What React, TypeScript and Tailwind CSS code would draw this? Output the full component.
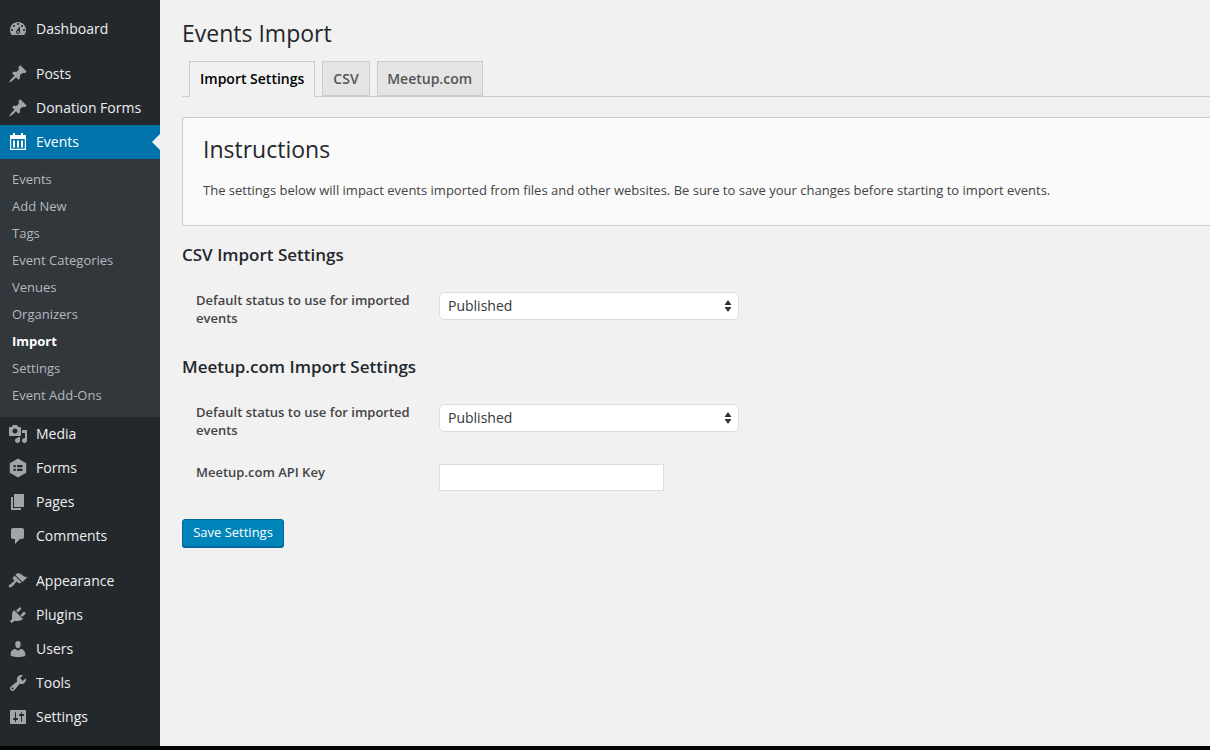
const icons: Record<string, string> = {
  dashboard:
    'M3.76 16h12.48c1.1-1.37 1.76-3.11 1.76-5 0-4.42-3.58-8-8-8s-8 3.58-8 8c0 1.89.66 3.63 1.76 5zM10 4c.55 0 1 .45 1 1s-.45 1-1 1-1-.45-1-1 .45-1 1-1zM6 6c.55 0 1 .45 1 1s-.45 1-1 1-1-.45-1-1 .45-1 1-1zm8 0c.55 0 1 .45 1 1s-.45 1-1 1-1-.45-1-1 .45-1 1-1zm-5.37 5.55L12 7v6c0 1.1-.9 2-2 2s-2-.9-2-2c0-.57.24-1.08.63-1.45zM4 10c.55 0 1 .45 1 1s-.45 1-1 1-1-.45-1-1 .45-1 1-1zm12 0c.55 0 1 .45 1 1s-.45 1-1 1-1-.45-1-1 .45-1 1-1zm-5 3c0-.55-.45-1-1-1s-1 .45-1 1 .45 1 1 1 1-.45 1-1z',
  pin: 'M10.44 3.02l1.82-1.82 6.36 6.35-1.83 1.82c-1.05-.68-2.48-.57-3.41.36l-.75.75c-.92.93-1.04 2.35-.35 3.41l-1.83 1.82-2.41-2.41-2.8 2.79c-.42.42-3.38 2.71-3.8 2.29s1.86-3.39 2.28-3.81l2.79-2.79L4.1 9.36l1.83-1.82c1.05.69 2.48.57 3.4-.36l.75-.75c.93-.92 1.05-2.35.36-3.41z',
  media:
    'M13 11V4c0-.55-.45-1-1-1h-1.67L9 1H5L3.67 3H2c-.55 0-1 .45-1 1v7c0 .55.45 1 1 1h10c.55 0 1-.45 1-1zM7 4.5c1.38 0 2.5 1.12 2.5 2.5S8.38 9.5 7 9.5 4.5 8.38 4.5 7 5.62 4.5 7 4.5zM14 6h5v10.5c0 1.38-1.12 2.5-2.5 2.5S14 17.88 14 16.5s1.12-2.5 2.5-2.5c.17 0 .34.02.5.05V9h-3V6zm-4 8.05V13h2v3.5c0 1.38-1.12 2.5-2.5 2.5S7 17.88 7 16.5 8.12 14 9.5 14c.17 0 .34.02.5.05z',
  forms:
    'M10 .5l8.2 4.7v9.6L10 19.5l-8.2-4.7V5.2L10 .5zM5.5 7v2.2h2.2V7H5.5zm3.6 0v2.2h5.4V7H9.1zm-3.6 3.8V13h2.2v-2.2H5.5zm3.6 0V13h5.4v-2.2H9.1z',
  pages: 'M6 15V2h10v13H6zm-1 1h8v2H3V5h2v11z',
  comments: 'M5 2h9c1.1 0 2 .9 2 2v7c0 1.1-.9 2-2 2h-2l-5 5v-5H5c-1.1 0-2-.9-2-2V4c0-1.1.9-2 2-2z',
  appearance:
    'M14.48 11.06L7.41 3.99l1.5-1.5c.5-.56 2.3-.47 3.51.32 1.21.8 1.43 1.28 2.91 2.1 1.18.64 2.45 1.26 4.45.85zm-.71.71L6.7 4.7 4.93 6.47c-.39.39-.39 1.02 0 1.41l1.06 1.06c.39.39.39 1.03 0 1.42-.6.6-1.43 1.11-2.21 1.69-.35.26-.7.53-1.01.84C1.43 13.23 0 15 1.04 16.04c1.04 1.04 3.14-.4 4.5-1.76.3-.31.57-.66.84-1.01.58-.78 1.08-1.61 1.68-2.21.39-.39 1.03-.39 1.42 0l1.06 1.06c.39.39 1.02.39 1.41 0z',
  plugins:
    'M13.11 4.36L9.87 7.6 8 5.73l3.24-3.24c.35-.34 1.05-.2 1.56.32.52.51.66 1.21.31 1.55zm-8 1.77l.91-1.12 9.01 9.01-1.19.84c-.71.71-2.63 1.16-3.82 1.16H6.14L4.9 17.26c-.59.59-1.54.59-2.12 0-.59-.58-.59-1.53 0-2.12l1.24-1.24v-3.88c0-1.13.4-3.19 1.09-3.89zm7.26 3.97l3.24-3.24c.34-.35 1.04-.21 1.55.31.52.51.66 1.21.31 1.55l-3.24 3.25z',
  users:
    'M10 9.25c-2.27 0-2.73-3.44-2.73-3.44C7 4.02 7.82 2 9.97 2c2.16 0 2.98 2.02 2.71 3.81 0 0-.41 3.44-2.68 3.44zm0 2.57L12.72 10c2.39 0 4.52 2.33 4.52 4.53v2.49s-3.65 1.13-7.24 1.13c-3.65 0-7.24-1.13-7.24-1.13v-2.49c0-2.25 1.94-4.48 4.47-4.48z',
  tools:
    'M16.68 9.77c-1.34 1.34-3.3 1.67-4.95.99l-5.41 6.52c-.99.99-2.59.99-3.58 0s-.99-2.59 0-3.57l6.52-5.42c-.68-1.65-.35-3.61.99-4.95 1.28-1.28 3.12-1.62 4.72-1.06l-2.89 2.89 2.82 2.82 2.86-2.87c.53 1.58.18 3.39-1.08 4.67zM3.81 16.21c.4.39 1.04.39 1.43 0 .4-.4.4-1.04 0-1.43-.39-.4-1.03-.4-1.43 0-.39.39-.39 1.03 0 1.43z',
  settings:
    'M18 16V4c0-.55-.45-1-1-1H3c-.55 0-1 .45-1 1v12c0 .55.45 1 1 1h14c.55 0 1-.45 1-1zM8 11h1c.55 0 1 .45 1 1s-.45 1-1 1H8v1.5c0 .28-.22.5-.5.5s-.5-.22-.5-.5V13H6c-.55 0-1-.45-1-1s.45-1 1-1h1V5.5c0-.28.22-.5.5-.5s.5.22.5.5V11zm5-2h-1c-.55 0-1-.45-1-1s.45-1 1-1h1V5.5c0-.28.22-.5.5-.5s.5.22.5.5V7h1c.55 0 1 .45 1 1s-.45 1-1 1h-1v5.5c0 .28-.22.5-.5.5s-.5-.22-.5-.5V9z',
  calendar:
    'M5 1h2v2h6V1h2v2h3v15H2V3h3V1zM3.2 7v9.8h13.6V7H3.2zM5 8.5h2v7H5v-7zm4 0h2v7H9v-7zm4 0h2v7h-2v-7z',
};

function MenuIcon({ name, white }: { name: string; white?: boolean }) {
  return (
    <svg
      viewBox="0 0 20 20"
      className={`w-5 h-5 shrink-0 ${white ? 'fill-white' : 'fill-[#a0a5aa]'}`}
    >
      <path fillRule="evenodd" d={icons[name]} />
    </svg>
  );
}

function MenuItem({ icon, label }: { icon: string; label: string }) {
  return (
    <div className="flex items-center h-[34px] pl-[8px] gap-[8px] text-[14px] text-[#eee]">
      <MenuIcon name={icon} />
      <span className="mb-[2px]">{label}</span>
    </div>
  );
}

const subItems = ['Events', 'Add New', 'Tags', 'Event Categories', 'Venues', 'Organizers', 'Import', 'Settings', 'Event Add-Ons'];

function Sidebar() {
  return (
    <div className="w-[160px] shrink-0 bg-[#23282d] pt-[12px]">
      <MenuItem icon="dashboard" label="Dashboard" />
      <div className="h-[11px]" />
      <MenuItem icon="pin" label="Posts" />
      <MenuItem icon="pin" label="Donation Forms" />
      <div className="relative flex items-center h-[34px] pl-[8px] gap-[8px] text-[14px] text-white bg-[#0073aa]">
        <MenuIcon name="calendar" white />
        <span className="mb-[2px]">Events</span>
        <div className="absolute right-0 top-[9px] border-y-[8px] border-r-[8px] border-y-transparent border-r-[#f1f1f1]" />
      </div>
      <div className="bg-[#32373c] pt-[7px] pb-[8px]">
        {subItems.map((item) => (
          <div
            key={item}
            className={`h-[27px] pl-[12px] flex items-center text-[13px] ${
              item === 'Import' ? 'font-bold text-white' : 'text-[#b4b9be]'
            }`}
          >
            {item}
          </div>
        ))}
      </div>
      <MenuItem icon="media" label="Media" />
      <MenuItem icon="forms" label="Forms" />
      <MenuItem icon="pages" label="Pages" />
      <MenuItem icon="comments" label="Comments" />
      <div className="h-[11px]" />
      <MenuItem icon="appearance" label="Appearance" />
      <MenuItem icon="plugins" label="Plugins" />
      <MenuItem icon="users" label="Users" />
      <MenuItem icon="tools" label="Tools" />
      <MenuItem icon="settings" label="Settings" />
    </div>
  );
}

function StatusSelect() {
  return (
    <div className="relative w-[300px] h-[28px]">
      <select className="w-full h-full appearance-none bg-white border border-[#ddd] rounded-[5px] pl-[8px] pb-[2px] text-[14px] text-[#32373c]">
        <option>Published</option>
      </select>
      <svg viewBox="0 0 8 14" className="absolute right-[7px] top-[7px] w-[8px] h-[14px] fill-[#333]">
        <path d="M4 1l3.5 5h-7zM4 13L.5 8h7z" />
      </svg>
    </div>
  );
}

function FormRow({ label, children }: { label: string; children: React.ReactNode }) {
  return (
    <div className="flex">
      <div className="w-[257px] pl-[14px] pr-[20px] -mt-[1px] text-[13px] leading-[18px] font-semibold text-[#444] shrink-0">
        {label}
      </div>
      {children}
    </div>
  );
}

export default function App() {
  return (
    <div className="w-[1210px] h-[750px] overflow-hidden flex flex-col font-['Open_Sans',sans-serif]">
      <div className="flex h-[746px]">
        <Sidebar />
        <div className="flex-1 bg-[#f1f1f1] pl-[22px] overflow-hidden">
          <h1 className="text-[23px] leading-[29px] text-[#23282d] pt-[19px] h-[61px] box-border">Events Import</h1>
          <div className="flex h-[36px] pl-[7px] gap-[7px] border-b border-[#ccc]">
            <div className="h-[36px] px-[10px] pb-[2px] flex items-center border border-b-0 border-[#ccc] bg-[#f1f1f1] text-[14px] font-semibold text-black">
              Import Settings
            </div>
            <div className="h-[35px] px-[10px] pb-[1px] flex items-center border border-[#ccc] bg-[#e4e4e4] text-[14px] font-semibold text-[#555]">
              CSV
            </div>
            <div className="h-[35px] w-[106px] pb-[1px] justify-center flex items-center border border-[#ccc] bg-[#e4e4e4] text-[14px] font-semibold text-[#555]">
              Meetup.com
            </div>
          </div>

          <div className="mt-[20px] h-[109px] bg-[#fafafa] border border-r-0 border-[#ccc] rounded-l-[3px] pl-[20px] pt-[17px]">
            <h2 className="text-[23px] leading-[29px] text-[#23282d]">Instructions</h2>
            <p className="mt-[16px] text-[13px] leading-[20px] text-[#444]">
              The settings below will impact events imported from files and other websites. Be sure to save your changes before starting to import events.
            </p>
          </div>

          <h3 className="mt-[18px] text-[17px] leading-[22px] font-semibold text-[#23282d]">CSV Import Settings</h3>
          <div className="mt-[26px]">
            <FormRow label="Default status to use for imported events">
              <StatusSelect />
            </FormRow>
          </div>

          <h3 className="mt-[29px] text-[17px] leading-[22px] font-semibold text-[#23282d]">Meetup.com Import Settings</h3>
          <div className="mt-[26px]">
            <FormRow label="Default status to use for imported events">
              <StatusSelect />
            </FormRow>
          </div>
          <div className="mt-[25px]">
            <FormRow label="Meetup.com API Key">
              <input className="w-[225px] h-[27px] bg-white border border-[#ddd]" />
            </FormRow>
          </div>

          <button className="mt-[28px] w-[102px] h-[28px] bg-[#0085ba] border border-[#006799] rounded-[3px] shadow-[0_1px_0_#006799] text-[13px] text-white">
            Save Settings
          </button>
        </div>
      </div>
      <div className="h-[4px] bg-[#040604]" />
    </div>
  );
}
